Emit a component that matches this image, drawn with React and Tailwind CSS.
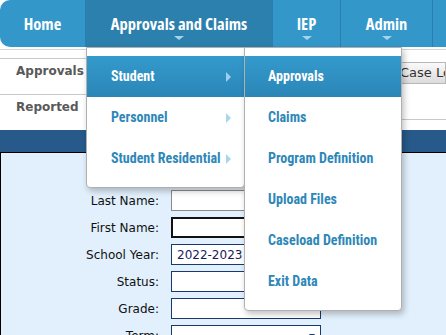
import React from 'react';

const navItems = [
    { label: 'Home', w: 'w-[86px]', arrow: false },
    { label: 'Approvals and Claims', w: 'w-[187px]', arrow: true, active: true },
    { label: 'IEP', w: 'w-[68px]', arrow: true },
    { label: 'Admin', w: 'w-[92px]', arrow: true },
    { label: '', w: 'w-[60px]', arrow: false },
];

const groupMenu = ['Student', 'Personnel', 'Student Residential'];
const subMenu = ['Approvals', 'Claims', 'Program Definition', 'Upload Files', 'Caseload Definition', 'Exit Data'];

const fields = [
    { label: 'Student ID:', kind: 'text', border: 'border border-[#7a7a7a]' },
    { label: 'Last Name:', kind: 'text', border: 'border border-[#8a8a8a]' },
    { label: 'First Name:', kind: 'text', border: 'border-2 border-[#111]' },
    { label: 'School Year:', kind: 'select', value: '2022-2023', border: 'border border-[#163a6e]' },
    { label: 'Status:', kind: 'select', border: 'border border-[#163a6e]' },
    { label: 'Grade:', kind: 'select', border: 'border border-[#163a6e]' },
    { label: 'Term:', kind: 'select', border: 'border border-[#163a6e]' },
];

const navFont = "font-['Open_Sans',sans-serif] font-stretch-condensed whitespace-nowrap";
const menuFont = "font-['Roboto',sans-serif] font-stretch-condensed whitespace-nowrap";

const App = () => {
    return (
        <div className="relative w-[446px] h-[335px] overflow-hidden bg-white">
            {/* Top nav */}
            <div className={`flex h-[47px] bg-[#3398c9] rounded-l-[10px] ${navFont} font-bold text-white`}>
                {navItems.map((item, i) => (
                    <div
                        key={i}
                        className={`relative shrink-0 ${item.w} flex items-center justify-center border-r border-[#2a7fae] text-[16.5px] pt-[1px] ${item.active ? 'bg-[#2c80ad]' : ''}`}
                    >
                        {item.label}
                        {item.arrow && (
                            <span className="absolute bottom-[7px] left-1/2 -translate-x-1/2 w-0 h-0 border-l-[5px] border-r-[5px] border-t-[4px] border-l-transparent border-r-transparent border-t-[#a6d3ec]"></span>
                        )}
                    </div>
                ))}
            </div>

            {/* Tabs area */}
            <div className="mt-[2px] border-t border-[#d4d4d4] flex h-[81px] font-['DejaVu_Sans',sans-serif]">
                <div className="w-[398px] shrink-0 pt-[8px]">
                    <div className="h-[36px] border-t border-[#c8c8c8] pl-[16px] pt-[3px] text-[12px] font-bold text-[#595959]">Approvals</div>
                    <div className="h-[36px] border-t border-[#c8c8c8] pl-[16px] pt-[3px] text-[12px] font-bold text-[#595959]">Reported</div>
                </div>
                <div className="flex-1 min-w-0 pt-[12px]">
                    <div className="h-[22px] border border-[#b8b8b8] bg-gradient-to-b from-[#fafafa] to-[#dcdcdc] pl-[1px] text-[13px] leading-[20px] text-[#333] whitespace-nowrap overflow-hidden">Case Load</div>
                    <div className="mt-[35px] border-t border-[#c8c8c8]"></div>
                </div>
            </div>

            {/* Dark bar */}
            <div className="h-[22px] bg-[#27598a]"></div>

            {/* Form panel */}
            <div className="border-t border-l border-black bg-[#e1f0fc] pt-[10px] h-[200px] font-['DejaVu_Sans',sans-serif] text-[12px] text-[#111]">
                <div className="grid grid-cols-[158px_150px] gap-x-[12px] gap-y-[6px]">
                    {fields.map((f) => (
                        <React.Fragment key={f.label}>
                            <div className="h-[21px] flex items-center justify-end whitespace-nowrap">{f.label}</div>
                            <div className={`h-[21px] bg-white ${f.border} flex items-center justify-between px-[5px]`}>
                                <span className="text-[#1a1a5a] text-[12px]">{f.value || ''}</span>
                                {f.kind === 'select' && (
                                    <span className="w-0 h-0 border-l-[3px] border-r-[3px] border-t-[4px] border-l-transparent border-r-transparent border-t-[#163a6e]"></span>
                                )}
                            </div>
                        </React.Fragment>
                    ))}
                </div>
            </div>

            {/* Dropdown: group menu */}
            <div className={`absolute left-[86px] top-[47px] w-[159px] bg-white border border-[#b0b0b0] rounded-b-[4px] shadow-[2px_3px_6px_rgba(0,0,0,0.25)] pt-[8px] pb-[8px] ${menuFont} font-bold text-[14px]`}>
                {groupMenu.map((m, i) => (
                    <div
                        key={m}
                        className={`relative h-[41px] flex items-center pl-[24px] ${i === 0 ? 'bg-gradient-to-b from-[#349acc] to-[#2b86b7] text-white' : 'text-[#2e87b8]'}`}
                    >
                        {m}
                        <span className={`absolute right-[13px] top-1/2 -translate-y-1/2 w-0 h-0 border-t-[5px] border-b-[5px] border-l-[5px] border-t-transparent border-b-transparent ${i === 0 ? 'border-l-[#9cd0ee]' : 'border-l-[#a9d6ef]'}`}></span>
                    </div>
                ))}
            </div>

            {/* Dropdown: sub menu */}
            <div className={`absolute left-[244px] top-[47px] w-[158px] bg-white border border-[#b0b0b0] rounded-b-[4px] shadow-[2px_3px_6px_rgba(0,0,0,0.25)] pt-[8px] pb-[8px] ${menuFont} font-bold text-[14px]`}>
                {subMenu.map((m, i) => (
                    <div
                        key={m}
                        className={`h-[41px] flex items-center pl-[23px] ${i === 0 ? 'bg-gradient-to-b from-[#349acc] to-[#2b86b7] text-white' : 'text-[#2e87b8]'}`}
                    >
                        {m}
                    </div>
                ))}
            </div>
        </div>
    );
};

export default App;
